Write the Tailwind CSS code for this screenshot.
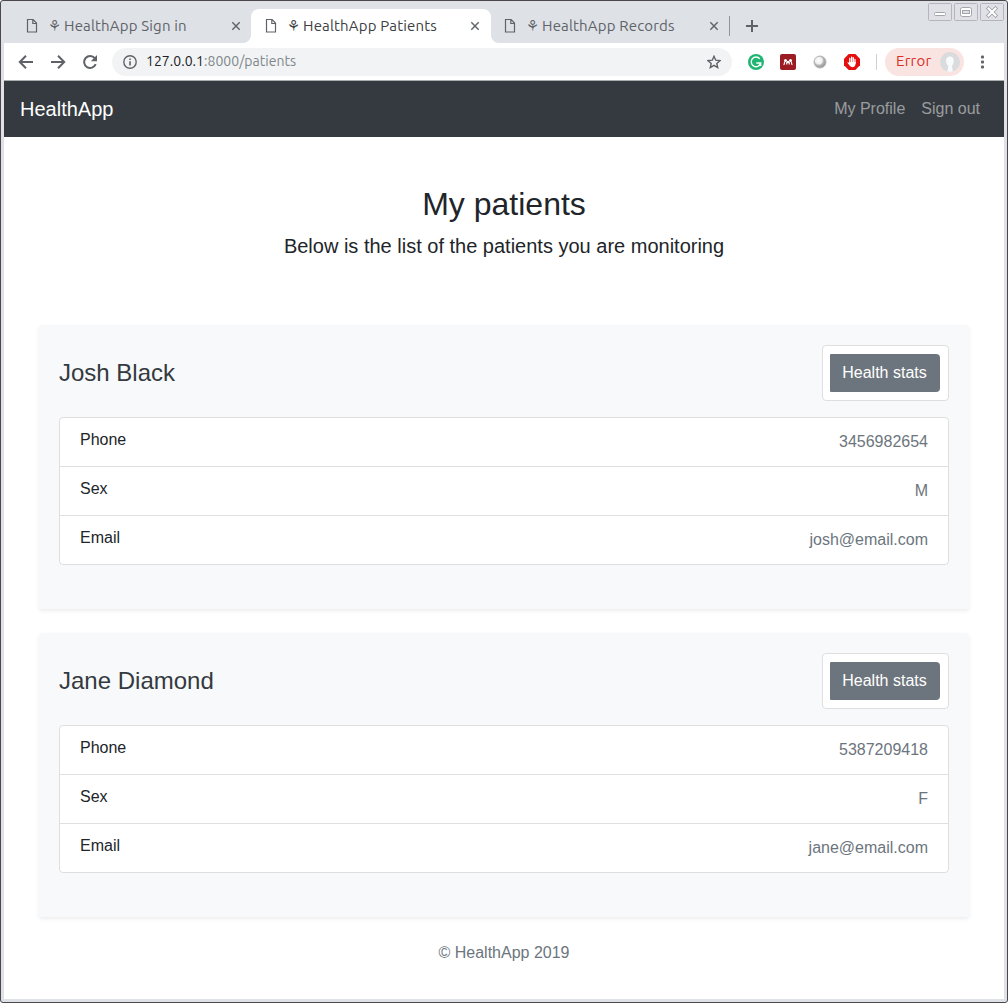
<!DOCTYPE html>
<html lang="en">
<head>
<meta charset="utf-8">
<title>HealthApp Patients</title>
<script src="https://cdn.jsdelivr.net/npm/@tailwindcss/browser@4"></script>
</head>
<body class="bg-white">
<svg class="hidden">
  <symbol id="page" viewBox="0 0 12 16"><path d="M1.5 1.5h5.6l3.4 3.6v8.9h-9zM6.8 1.5v4h3.7" fill="none" stroke="currentColor" stroke-width="1.2"/></symbol>
  <symbol id="close" viewBox="0 0 10 10"><path d="M1.3 1.3l7.4 7.4M8.7 1.3L1.3 8.7" stroke="currentColor" stroke-width="1.4"/></symbol>
</svg>
<div class="relative flex h-[1003px] w-[1008px] flex-col overflow-hidden rounded-[3px] border border-[#4b474b] bg-[#dee1e6] px-[3px] pb-[3px]">

  <!-- Tab strip -->
  <div class="flex h-[42px] shrink-0 pt-2 font-['Ubuntu','Noto_Sans',sans-serif] text-[15px] leading-[18px] tracking-[0.17px] text-[#5f6368]">
    <div class="flex h-[34px] w-[247px] items-center rounded-br-[8px] pl-[22px] pr-[10px]">
      <svg class="h-4 w-3"><use href="#page"/></svg>
      <span class="ml-[10px] w-4 shrink-0 font-['DejaVu_Sans']">⚘</span>
      <span class="flex-1 whitespace-nowrap">HealthApp Sign in</span>
      <svg class="size-[10px]"><use href="#close"/></svg>
    </div>
    <div class="relative flex h-[34px] w-[240px] items-center rounded-t-[8px] bg-white pl-[14px] pr-[11px] text-[#3c4043]">
      <svg class="absolute bottom-0 -left-2 size-2"><path d="M8 0v8H0a8 8 0 0 0 8-8" fill="#fff"/></svg>
      <svg class="absolute bottom-0 -right-2 size-2"><path d="M0 0v8h8a8 8 0 0 1-8-8" fill="#fff"/></svg>
      <svg class="h-4 w-3 text-[#5f6368]"><use href="#page"/></svg>
      <span class="ml-[10px] w-4 shrink-0 font-['DejaVu_Sans']">⚘</span>
      <span class="flex-1 whitespace-nowrap">HealthApp Patients</span>
      <svg class="size-[10px] text-[#5f6368]"><use href="#close"/></svg>
    </div>
    <div class="flex h-[34px] w-[238px] items-center pl-[13px] pr-[10px]">
      <svg class="h-4 w-3"><use href="#page"/></svg>
      <span class="ml-[10px] w-4 shrink-0 font-['DejaVu_Sans']">⚘</span>
      <span class="flex-1 whitespace-nowrap">HealthApp Records</span>
      <svg class="size-[10px]"><use href="#close"/></svg>
    </div>
    <div class="mt-[7px] h-5 w-px bg-[#92959a]"></div>
    <svg class="ml-4 mt-[11px] size-3"><path d="M6 0v12M0 6h12" stroke="#5f6368" stroke-width="2"/></svg>
  </div>

  <!-- Window controls -->
  <div class="absolute right-[3px] top-[2px] flex gap-[2px]">
    <svg class="h-[18px] w-6"><rect x=".5" y=".5" width="23" height="17" rx="1" fill="#dfe1e6" stroke="#b7b3be"/><rect x="6.500" y="9.500" width="11" height="3" rx="1" fill="#fff" stroke="#a4a3ab"/></svg>
    <svg class="h-[18px] w-6"><rect x=".5" y=".5" width="23" height="17" rx="1" fill="#dfe1e6" stroke="#b7b3be"/><rect x="6.500" y="4.500" width="11" height="9" rx="2" fill="#fff" stroke="#a4a3ab"/><rect x="8.500" y="7.500" width="7" height="3" fill="#dfe1e6" stroke="#a4a3ab"/></svg>
    <svg class="h-[18px] w-6"><rect x=".5" y=".5" width="23" height="17" rx="1" fill="#dfe1e6" stroke="#b7b3be"/><path d="M8.500 5.500l7 7M15.500 5.500l-7 7" stroke="#a4a3ab" stroke-width="3.800" stroke-linecap="square"/><path d="M8.500 5.500l7 7M15.500 5.500l-7 7" stroke="#fff" stroke-width="2" stroke-linecap="square"/></svg>
  </div>

  <!-- Toolbar -->
  <div class="flex h-[38px] shrink-0 items-center border-b border-[#a9adae] bg-white font-['Ubuntu','Noto_Sans',sans-serif] text-[#5f6368]">
    <svg class="ml-[14px] h-4 w-4" fill="none" stroke="currentColor" stroke-width="2"><path d="M15 8H2M8 1.800L1.800 8 8 14.200"/></svg>
    <svg class="ml-4 h-4 w-4" fill="none" stroke="currentColor" stroke-width="2"><path d="M1 8h13M8 1.800L14.200 8 8 14.200"/></svg>
    <svg class="ml-4 h-4 w-4" fill="none" stroke="currentColor" stroke-width="2"><path d="M13.700 10.200A6 6 0 1 1 12.800 4.200"/><path d="M15 1v6.200H8.800z" fill="currentColor" stroke="none"/></svg>
    <div class="ml-[14px] flex h-7 w-[620px] items-center rounded-full bg-[#f1f3f4] pl-[11px] pr-[11px]">
      <svg class="size-[14px]"><circle cx="7" cy="7" r="6.200" fill="none" stroke="currentColor" stroke-width="1.400"/><path d="M7 6.200v4.300M7 3.500V5" stroke="currentColor" stroke-width="1.600"/></svg>
      <span class="ml-[9px] flex-1 whitespace-nowrap text-[14px] tracking-[0.03px] text-[#80868b]"><span class="text-[#202124]">127.0.0.1</span>:8000/patients</span>
      <svg class="size-[14px]" viewBox="0 0 14 14"><path d="M7 1.300l1.700 3.900 4.300.4-3.200 2.800.9 4.200L7 10.400l-3.700 2.200.9-4.200L1 5.600l4.300-.4z" fill="none" stroke="currentColor" stroke-width="1.400"/></svg>
    </div>
    <svg class="ml-4 size-4"><circle cx="8" cy="8" r="8" fill="#20b573"/><path d="M11.800 4.900A4.800 4.800 0 1 0 12.600 9.300M8.300 9h4.400v3" fill="none" stroke="#fff" stroke-width="1.400"/></svg>
    <svg class="ml-4 size-4"><rect width="16" height="16" rx="2" fill="#9b1c22"/><path d="M3.600 10.800c1-.5.800-1.600 1-3M12.400 10.800c-1-.5-.8-1.600-1-3M6.600 10.500c.3-.7.2-1.600.2-2.500M9.400 10.500c-.3-.7-.2-1.600-.2-2.500" fill="none" stroke="#fff" stroke-width="1.200"/><circle cx="5.500" cy="6.600" r="1.500" fill="#fff"/><circle cx="10.500" cy="6.600" r="1.500" fill="#fff"/><circle cx="8" cy="8" r="1.200" fill="#fff"/></svg>
    <svg class="ml-4 size-4"><defs><radialGradient id="ball" cx=".4" cy=".38" r=".65"><stop offset="0" stop-color="#fff"/><stop offset=".45" stop-color="#eee"/><stop offset=".6" stop-color="#b8b8b8"/><stop offset="1" stop-color="#8e8e8e"/></radialGradient></defs><circle cx="8" cy="8" r="6" fill="url(#ball)" stroke="#b5b5b5" stroke-width="1"/></svg>
    <svg class="ml-4 size-4"><path d="M4.700 0h6.600L16 4.700v6.600L11.300 16H4.700L0 11.300V4.700z" fill="#e60f0f"/><path d="M5.800 4.500V9M7.600 3.200V9M9.300 3.600V9M11 5.500V9" stroke="#fff" stroke-width="1.300" stroke-linecap="round"/><path d="M5.200 8h6.450c.2 2.800-.7 5.200-2.950 5.200C6.300 13.200 5.600 11.500 3.300 8.600c.5-.7 1.300-.5 1.900.3z" fill="#fff"/></svg>
    <div class="ml-4 h-4 w-px bg-[#cfd1d4]"></div>
    <div class="ml-2 flex h-7 w-[79px] items-center justify-between rounded-full bg-[#fae4e2] pl-[11px] pr-[4px] text-[15px] tracking-[0.25px] text-[#d93025]">
      <span>Error</span>
      <svg class="size-5"><circle cx="10" cy="10" r="10" fill="#d9dbdd"/><path d="M10 4.500c2.600 0 4 1.700 3.800 4.500-.2 2.300-1 4-1.800 5l.8 5.300c-1.900.7-4 .7-5.600.2L8.400 14C6.900 12.800 6 11 6 9c0-2.800 1.500-4.500 4-4.500" fill="#f8fafb"/></svg>
    </div>
    <svg class="ml-[16px] h-[14px] w-1" fill="currentColor"><rect y="0.500" x="1" width="3" height="3" rx="1"/><rect y="5.500" x="1" width="3" height="3" rx="1"/><rect y="10.500" x="1" width="3" height="3" rx="1"/></svg>
  </div>

  <!-- Page -->
  <div class="flex-1 bg-white font-['Liberation_Sans',sans-serif] text-base leading-6 text-[#212529]">
    <nav class="flex h-14 items-center justify-between bg-[#343a40] px-4">
      <a class="text-xl leading-[30px] text-white">HealthApp</a>
      <div class="flex gap-4 pr-2 text-white/50"><a>My Profile</a><a>Sign out</a></div>
    </nav>
    <header class="pt-12 text-center">
      <h1 class="mb-2 text-[32px] leading-[38px]">My patients</h1>
      <p class="text-xl leading-[30px]">Below is the list of the patients you are monitoring</p>
    </header>
    <main class="mt-16 flex flex-col gap-6 px-[35px]">
      <section class="h-[284px] rounded-[3px] bg-[#f8f9fa] p-5 shadow-[0_2px_4px_rgba(0,0,0,0.075)]">
        <div class="flex items-center justify-between">
          <h2 class="pb-[2px] text-2xl leading-[29px] text-[#343a40]">Josh Black</h2>
          <div class="h-14 w-[127px] rounded-[4px] border border-[#dfdfdf] bg-white py-2 pl-[7px] pr-2"><button class="h-[38px] w-full whitespace-nowrap rounded-l-[1px] rounded-r-[4px] bg-[#6c757d] pr-px text-white">Health stats</button></div>
        </div>
        <dl class="mt-4 divide-y divide-[#dfdfdf] rounded-[4px] border border-[#dfdfdf] bg-white">
          <div class="flex h-[49px] justify-between px-5"><dt class="pt-[10px]">Phone</dt><dd class="pt-3 text-[#6c757d]">3456982654</dd></div>
          <div class="flex h-[49px] justify-between px-5"><dt class="pt-[10px]">Sex</dt><dd class="pt-3 text-[#6c757d]">M</dd></div>
          <div class="flex h-12 justify-between px-5"><dt class="pt-[10px]">Email</dt><dd class="pt-3 text-[#6c757d]">josh@email.com</dd></div>
        </dl>
      </section>
      <section class="h-[284px] rounded-[3px] bg-[#f8f9fa] p-5 shadow-[0_2px_4px_rgba(0,0,0,0.075)]">
        <div class="flex items-center justify-between">
          <h2 class="pb-[2px] text-2xl leading-[29px] text-[#343a40]">Jane Diamond</h2>
          <div class="h-14 w-[127px] rounded-[4px] border border-[#dfdfdf] bg-white py-2 pl-[7px] pr-2"><button class="h-[38px] w-full whitespace-nowrap rounded-l-[1px] rounded-r-[4px] bg-[#6c757d] pr-px text-white">Health stats</button></div>
        </div>
        <dl class="mt-4 divide-y divide-[#dfdfdf] rounded-[4px] border border-[#dfdfdf] bg-white">
          <div class="flex h-[49px] justify-between px-5"><dt class="pt-[10px]">Phone</dt><dd class="pt-3 text-[#6c757d]">5387209418</dd></div>
          <div class="flex h-[49px] justify-between px-5"><dt class="pt-[10px]">Sex</dt><dd class="pt-3 text-[#6c757d]">F</dd></div>
          <div class="flex h-12 justify-between px-5"><dt class="pt-[10px]">Email</dt><dd class="pt-3 text-[#6c757d]">jane@email.com</dd></div>
        </dl>
      </section>
    </main>
    <footer class="pt-6 text-center text-[#6c757d]">© HealthApp 2019</footer>
  </div>
</div>
</body>
</html>
